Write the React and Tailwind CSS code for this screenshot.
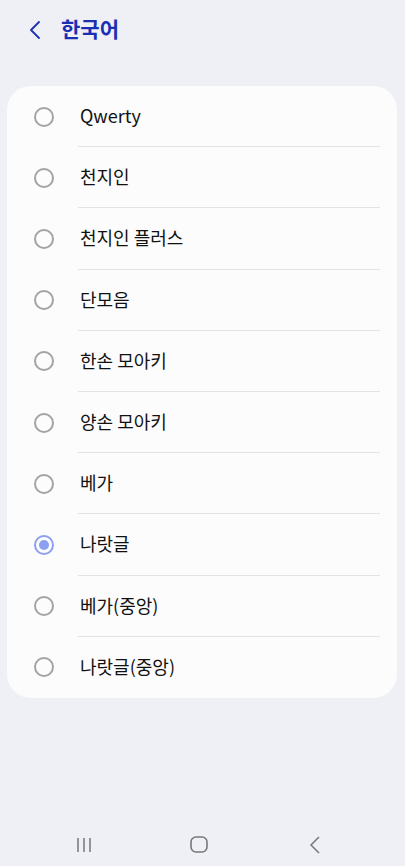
import React from "react";

const items = ["Qwerty", "천지인", "천지인 플러스", "단모음", "한손 모아키", "양손 모아키", "베가", "나랏글", "베가(중앙)", "나랏글(중앙)"];

export default function App() {
  return (
    <div className="h-[866px] w-[405px] bg-[#eff0f5] flex flex-col overflow-hidden" style={{ fontFamily: '"Noto Sans CJK KR", Roboto, sans-serif' }}>
      <div className="h-[60px] flex items-center pl-[28px] pb-[2px]">
        <svg width="14" height="20" viewBox="0 0 14 20" className="mr-[19px] mt-[1px]">
          <path d="M11 2 L3 10 L11 18" fill="none" stroke="#1b2fb2" strokeWidth="1.8" strokeLinecap="round" strokeLinejoin="round" />
        </svg>
        <span className="text-[21px] font-bold text-[#1b2fb2] leading-none mt-[-2px]">한국어</span>
      </div>
      <div className="mt-[26px] mx-[7px] w-[390px] bg-[#fcfcfc] rounded-[24px]">
        {items.map((t, i) => (
          <div key={t} className="h-[61.2px] relative flex items-center">
            <div className="w-[73px] flex justify-center pl-[1px]">
              {t === "나랏글" ? (
                <div className="w-[20px] h-[20px] rounded-full border-2 border-[#8c9ff0] flex items-center justify-center">
                  <div className="w-[10px] h-[10px] rounded-full bg-[#8c9ff0]" />
                </div>
              ) : (
                <div className="w-[20px] h-[20px] rounded-full border-2 border-[#a3a3a3]" />
              )}
            </div>
            <span className="text-[18px] text-[#111] leading-none mt-[-3px]">{t}</span>
            {i < items.length - 1 && (
              <div className="absolute bottom-0 left-[71px] w-[302px] h-px bg-[#e3e3e5]" />
            )}
          </div>
        ))}
      </div>
      <div className="flex-1" />
      <div className="h-[42px] flex items-center justify-around px-[50px]">
        <svg width="18" height="18" viewBox="0 0 18 18" className="ml-[-8px]">
          <path d="M3 2 V16 M9 2 V16 M15 2 V16" stroke="#777" strokeWidth="1.5" />
        </svg>
        <svg width="20" height="20" viewBox="0 0 20 20" className="ml-[30px]">
          <rect x="2" y="2" width="16" height="15" rx="5" fill="none" stroke="#777" strokeWidth="1.6" />
        </svg>
        <svg width="14" height="20" viewBox="0 0 14 20" className="ml-[32px]">
          <path d="M11 2 L3 10 L11 18" fill="none" stroke="#777" strokeWidth="1.5" />
        </svg>
      </div>
    </div>
  );
}
